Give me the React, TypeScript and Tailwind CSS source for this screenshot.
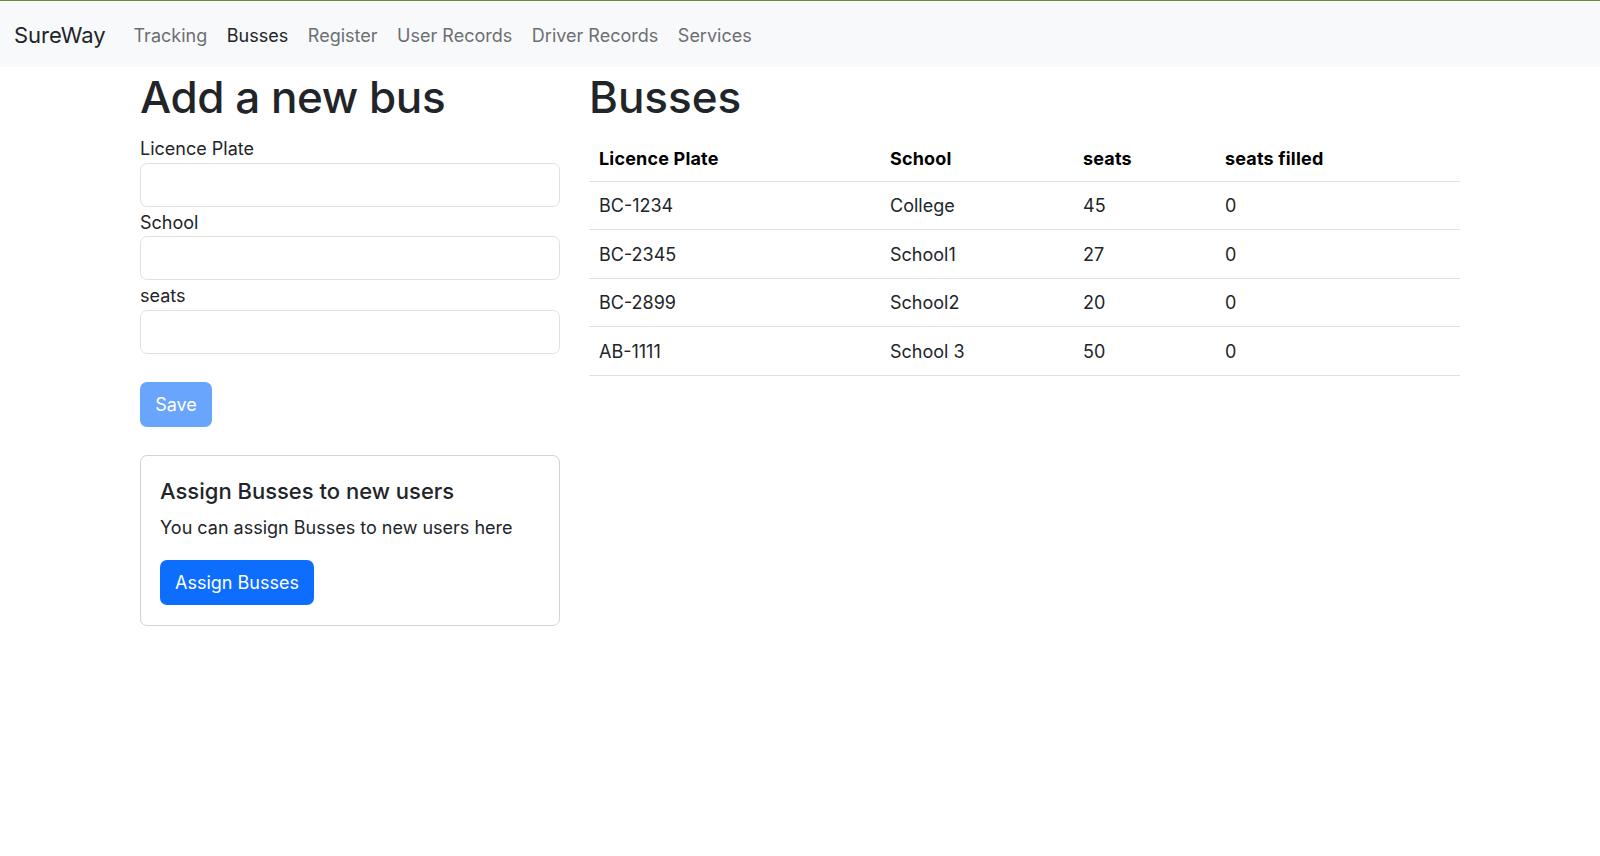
import React from "react";

const rows = [
  ["BC-1234", "College", "45", "0"],
  ["BC-2345", "School1", "27", "0"],
  ["BC-2899", "School2", "20", "0"],
  ["AB-1111", "School 3", "50", "0"],
];

const font = { fontFamily: "Inter, 'Noto Sans', sans-serif" };

export default function App() {
  return (
    <div className="min-h-[856px] bg-white text-[#212529]" style={font}>
      <nav className="flex h-[67px] items-center border-t border-[#6a8a3a] bg-[#f8f9fa] pl-[14px] pt-[2px]">
        <span className="mr-[18px] text-[22px] text-[#212529]">SureWay</span>
        <div className="flex text-[18px]">
          <a className="px-[9.8px] text-[#6c6f72]">Tracking</a>
          <a className="px-[9.8px] text-[#212529]">Busses</a>
          <a className="px-[9.8px] text-[#6c6f72]">Register</a>
          <a className="px-[9.8px] text-[#6c6f72]">User Records</a>
          <a className="px-[9.8px] text-[#6c6f72]">Driver Records</a>
          <a className="px-[9.8px] text-[#6c6f72]">Services</a>
        </div>
      </nav>

      <main className="mx-auto flex w-[1320px] gap-[29px] pt-[4px]">
        <section className="w-[420px] shrink-0">
          <h1 className="mb-[9px] h-[53px] text-[44px] font-medium leading-[53px] tracking-[-0.01em]">Add a new bus</h1>
          {["Licence Plate", "School", "seats"].map((l) => (
            <div key={l}>
              <label className="block h-[29.5px] pt-[2px] text-[18px] leading-[27px]">{l}</label>
              <input className="block h-[44px] w-full rounded-[7px] border border-[#dee2e6] bg-white px-3 outline-none" />
            </div>
          ))}
          <button className="mt-[28px] h-[45px] w-[72px] rounded-[7px] bg-[#6aa5fd] text-[18px] text-white">Save</button>
          <div className="mt-[28px] h-[171px] rounded-[7px] border border-[#d3d3d3] px-[19px] pt-[22px]">
            <h5 className="mb-[10px] text-[22px] font-medium leading-[26.4px]">Assign Busses to new users</h5>
            <p className="mb-[19px] text-[18px] leading-[27px]">You can assign Busses to new users here</p>
            <button className="h-[45px] w-[154px] rounded-[7px] bg-[#0d6efd] text-[18px] text-white">Assign Busses</button>
          </div>
        </section>

        <section className="flex-1">
          <h1 className="mb-[9px] h-[53px] text-[44px] font-medium leading-[53px]">Busses</h1>
          <div className="grid grid-cols-[291px_193px_142px_1fr]">
            {["Licence Plate", "School", "seats", "seats filled"].map((h) => (
              <div key={h} className="flex h-[48.5px] items-center border-b border-[#dee2e6] pl-[10px] pt-[3px] text-[18px] font-bold tracking-[0.01em] text-black">
                {h}
              </div>
            ))}
            {rows.map((r) =>
              r.map((c, i) => (
                <div key={r[0] + i} className="flex h-[48.5px] items-center border-b border-[#dee2e6] pl-[10px] pt-[1px] text-[18px]">
                  {c}
                </div>
              ))
            )}
          </div>
        </section>
      </main>
    </div>
  );
}
